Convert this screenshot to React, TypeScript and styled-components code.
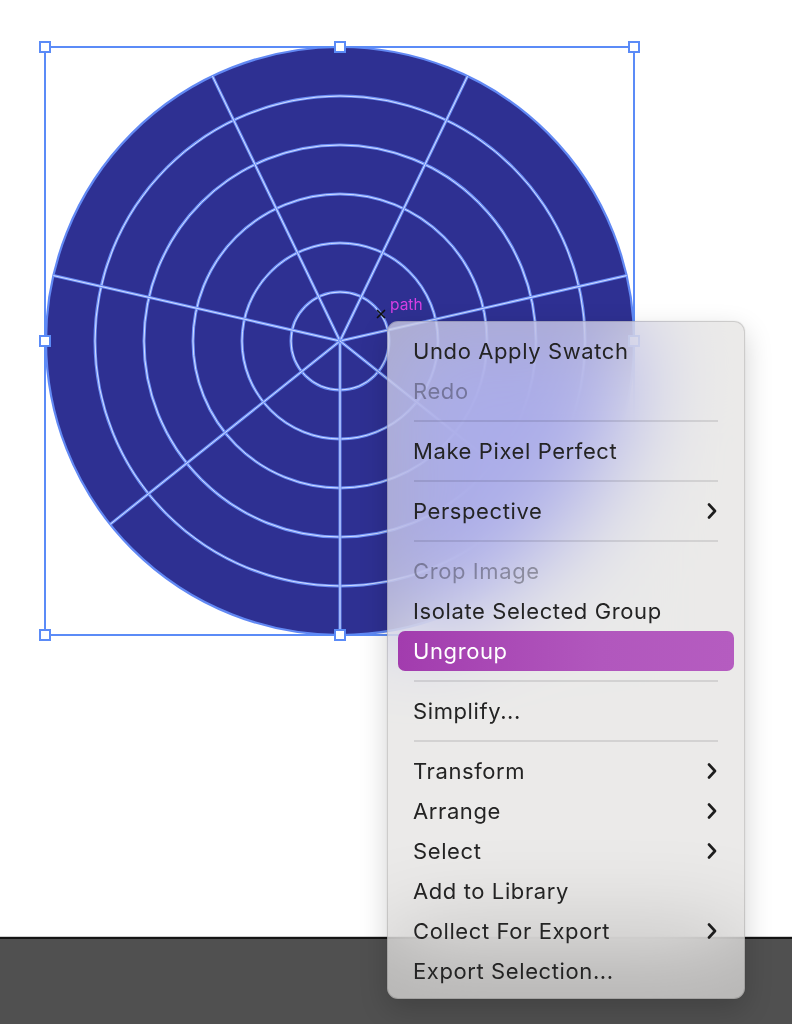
import React from "react";
import styled, { createGlobalStyle } from "styled-components";

const Global = createGlobalStyle`
  html, body { margin: 0; padding: 0; background: #ffffff; }
  body { overflow: hidden; font-family: Inter, "Noto Sans", sans-serif; }
`;

const Page = styled.div`
  position: relative;
  width: 792px;
  height: 1024px;
  display: flex;
  flex-direction: column;
  overflow: hidden;
`;

const Canvas = styled.div`
  height: 936px;
  background: #ffffff;
  border-bottom: 1px solid #cfcfcf;
`;

const BottomBar = styled.div`
  flex: 1;
  background: #505050;
  border-top: 2px solid #141414;
`;

const Menu = styled.div`
  position: absolute;
  left: 387px;
  top: 321px;
  width: 358px;
  box-sizing: border-box;
  padding: 9px 10px 7px;
  border-radius: 11px;
  border: 1px solid rgba(0, 0, 0, 0.13);
  background: rgba(226, 225, 223, 0.7);
  backdrop-filter: blur(48px) saturate(210%);
  -webkit-backdrop-filter: blur(48px) saturate(210%);
  box-shadow: 0 10px 28px rgba(0, 0, 0, 0.18), 0 0 2px rgba(0, 0, 0, 0.1);
  display: flex;
  flex-direction: column;
`;

const Item = styled.div<{ $disabled?: boolean; $active?: boolean }>`
  height: 40px;
  box-sizing: border-box;
  padding: 0 17px 0 15px;
  display: flex;
  align-items: center;
  justify-content: space-between;
  border-radius: 7px;
  font-size: 22px;
  letter-spacing: 0.6px;
  color: ${(p) => (p.$active ? "#ffffff" : p.$disabled ? "rgba(0,0,0,0.32)" : "#242424")};
  background: ${(p) => (p.$active ? "linear-gradient(90deg, #a23cae 0%, #b157bd 60%, #b55cc0 100%)" : "transparent")};
`;

const Separator = styled.div`
  height: 2px;
  margin: 9px 16px;
  background: rgba(0, 0, 0, 0.1);
`;

const Chevron = () => (
  <svg width="10" height="16" viewBox="0 0 10 16">
    <path d="M2 1.5 L8 8 L2 14.5" fill="none" stroke="#1d1d1d" strokeWidth="2.6" strokeLinecap="round" strokeLinejoin="round" />
  </svg>
);

type Entry = { label?: string; sub?: boolean; disabled?: boolean; active?: boolean; sep?: boolean };

const entries: Entry[] = [
  { label: "Undo Apply Swatch" },
  { label: "Redo", disabled: true },
  { sep: true },
  { label: "Make Pixel Perfect" },
  { sep: true },
  { label: "Perspective", sub: true },
  { sep: true },
  { label: "Crop Image", disabled: true },
  { label: "Isolate Selected Group" },
  { label: "Ungroup", active: true },
  { sep: true },
  { label: "Simplify..." },
  { sep: true },
  { label: "Transform", sub: true },
  { label: "Arrange", sub: true },
  { label: "Select", sub: true },
  { label: "Add to Library" },
  { label: "Collect For Export", sub: true },
  { label: "Export Selection..." },
];

const Artwork = () => {
  const cx = 340;
  const cy = 341;
  const R = 294;
  const rings = [49, 98, 147, 196, 245];
  const spokes = Array.from({ length: 7 }, (_, k) => {
    const a = ((90 + (k * 360) / 7) * Math.PI) / 180;
    return { x: cx + Math.cos(a) * R, y: cy + Math.sin(a) * R };
  });
  const handles = [
    [45, 47], [340, 47], [634, 47],
    [45, 341], [634, 341],
    [45, 635], [340, 635], [634, 635],
  ];
  return (
    <svg width="792" height="700" viewBox="0 0 792 700" style={{ display: "block" }}>
      <circle cx={cx} cy={cy} r={R} fill="#2e3092" stroke="#6289f4" strokeWidth="2.2" />
      {rings.map((r) => (
        <g key={r}>
          <circle cx={cx} cy={cy} r={r} fill="none" stroke="#6c8ff6" strokeWidth="3" />
          <circle cx={cx} cy={cy} r={r} fill="none" stroke="#d2ddff" strokeWidth="1" />
        </g>
      ))}
      {spokes.map((p, i) => (
        <g key={i}>
          <line x1={cx} y1={cy} x2={p.x} y2={p.y} stroke="#6c8ff6" strokeWidth="3" />
          <line x1={cx} y1={cy} x2={p.x} y2={p.y} stroke="#d2ddff" strokeWidth="1" />
        </g>
      ))}
      <rect x="45" y="47" width="589" height="588" fill="none" stroke="#5b8bf7" strokeWidth="2" />
      {handles.map(([x, y], i) => (
        <rect key={i} x={x - 5} y={y - 5} width="10" height="10" fill="#ffffff" stroke="#5b8bf7" strokeWidth="2" />
      ))}
      <g stroke="#111" strokeWidth="1.7" strokeLinecap="round">
        <line x1="377.5" y1="310.5" x2="384.5" y2="317.5" />
        <line x1="384.5" y1="310.5" x2="377.5" y2="317.5" />
      </g>
      <text x="390" y="310" fill="#d63fe3" fontFamily="Inter, sans-serif" fontSize="15.5">path</text>
    </svg>
  );
};

export default function App() {
  return (
    <Page>
      <Global />
      <Canvas>
        <Artwork />
      </Canvas>
      <BottomBar />
      <Menu>
        {entries.map((e, i) =>
          e.sep ? (
            <Separator key={i} />
          ) : (
            <Item key={i} $disabled={e.disabled} $active={e.active}>
              <span>{e.label}</span>
              {e.sub && <Chevron />}
            </Item>
          )
        )}
      </Menu>
    </Page>
  );
}
